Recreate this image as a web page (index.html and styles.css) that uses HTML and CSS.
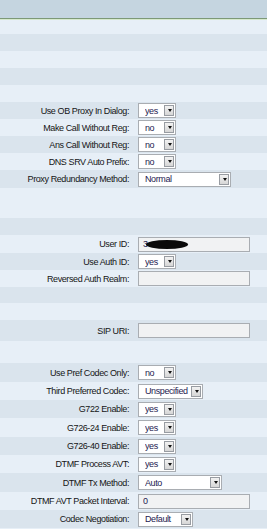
FILE: index.html
```html
<!DOCTYPE html>
<html lang="en">
<head>
    <meta charset="UTF-8">
    <meta name="viewport" content="width=device-width, initial-scale=1.0">
    <title>Line Settings</title>
    <link rel="stylesheet" href="styles.css">
</head>
<body>

    <div class="topbar"></div>

    <!-- Proxy and Registration -->
    <div class="settings">
        <div class="row h14"></div>
        <div class="row alt"></div>
        <div class="row"></div>
        <div class="row alt"></div>
        <div class="row"></div>

        <div class="row alt">
            <label>Use OB Proxy In Dialog:</label>
            <span class="select w38"><select><option>yes</option><option>no</option></select></span>
        </div>
        <div class="row">
            <label>Make Call Without Reg:</label>
            <span class="select w38"><select><option>no</option><option>yes</option></select></span>
        </div>
        <div class="row alt">
            <label>Ans Call Without Reg:</label>
            <span class="select w38"><select><option>no</option><option>yes</option></select></span>
        </div>
        <div class="row">
            <label>DNS SRV Auto Prefix:</label>
            <span class="select w38"><select><option>no</option><option>yes</option></select></span>
        </div>
        <div class="row alt h18">
            <label>Proxy Redundancy Method:</label>
            <span class="select w93"><select><option>Normal</option><option>Based on SRV Port</option></select></span>
        </div>

        <!-- Subscriber Information -->
        <div class="row h14"></div>
        <div class="row h16"></div>
        <div class="row alt"></div>

        <div class="row h18">
            <label>User ID:</label>
            <span class="field">
                <input class="text" type="text" value="3">
                <span class="redact"></span>
            </span>
        </div>
        <div class="row alt">
            <label>Use Auth ID:</label>
            <span class="select w38"><select><option>yes</option><option>no</option></select></span>
        </div>
        <div class="row">
            <label>Reversed Auth Realm:</label>
            <input class="text" type="text" value="">
        </div>

        <div class="row alt h16"></div>
        <div class="row"></div>

        <div class="row alt h21">
            <label>SIP URI:</label>
            <input class="text" type="text" value="">
        </div>

        <!-- Audio Configuration -->
        <div class="row h22"></div>

        <div class="row alt h19">
            <label>Use Pref Codec Only:</label>
            <span class="select w38"><select><option>no</option><option>yes</option></select></span>
        </div>
        <div class="row h18">
            <label>Third Preferred Codec:</label>
            <span class="select w65"><select><option>Unspecified</option><option>G711u</option></select></span>
        </div>
        <div class="row alt h18">
            <label>G722 Enable:</label>
            <span class="select w38"><select><option>yes</option><option>no</option></select></span>
        </div>
        <div class="row h19">
            <label>G726-24 Enable:</label>
            <span class="select w38"><select><option>yes</option><option>no</option></select></span>
        </div>
        <div class="row alt h18">
            <label>G726-40 Enable:</label>
            <span class="select w38"><select><option>yes</option><option>no</option></select></span>
        </div>
        <div class="row h18">
            <label>DTMF Process AVT:</label>
            <span class="select w38"><select><option>yes</option><option>no</option></select></span>
        </div>
        <div class="row alt h19">
            <label>DTMF Tx Method:</label>
            <span class="select w84"><select><option>Auto</option><option>InBand</option></select></span>
        </div>
        <div class="row h18">
            <label>DTMF AVT Packet Interval:</label>
            <input class="text" type="text" value="0">
        </div>
        <div class="row alt h18">
            <label>Codec Negotiation:</label>
            <span class="select w55"><select><option>Default</option><option>List All</option></select></span>
        </div>
    </div>

</body>
</html>
```

FILE: styles.css
```css
/* General */
body {
    margin: 0;
    font-family: "Liberation Sans", Arial, sans-serif;
    font-size: 9px;
    letter-spacing: -0.4px;
    color: #151515;
    background-color: #e7eff7;
}

.topbar {
    height: 20px;
    background: linear-gradient(to bottom, #c5d5e0 0, #c5d5e0 18px, #7d9977 18px, #7d9977 19px, #d6e9cd 19px);
}

/* Setting rows */
.row {
    display: grid;
    grid-template-columns: 129px auto;
    column-gap: 9px;
    align-items: center;
    justify-content: start;
    height: 17px;
    background-color: #e7eff7;
}

.row.alt {
    background-color: #dae4ed;
}

.h14 { height: 14px; }
.h16 { height: 16px; }
.h18 { height: 18px; }
.h19 { height: 19px; }
.h21 { height: 21px; }
.h22 { height: 22px; }

.row label {
    text-align: right;
    white-space: nowrap;
}

/* Drop-downs */
.select {
    position: relative;
    display: block;
    box-sizing: border-box;
    height: 15px;
    border: 1px solid #a9adb2;
    background-color: #fff;
}

.select select {
    appearance: none;
    -webkit-appearance: none;
    display: block;
    width: 100%;
    height: 13px;
    margin: 0;
    padding: 0 0 0 6px;
    border: none;
    background: transparent;
    font: inherit;
    letter-spacing: inherit;
    color: #1e2150;
    outline: none;
}

.select::after {
    content: "";
    position: absolute;
    top: 1px;
    right: 1px;
    width: 8px;
    height: 9px;
    border: 1px solid #989ca2;
    background: linear-gradient(to bottom, #f2f2f2, #d6d6d6);
}

.select::before {
    content: "";
    position: absolute;
    top: 5px;
    right: 3.5px;
    z-index: 1;
    border-left: 2.5px solid transparent;
    border-right: 2.5px solid transparent;
    border-top: 3px solid #111;
}

.w38 { width: 38px; }
.w55 { width: 55px; }
.w65 { width: 65px; }
.w84 { width: 84px; }
.w93 { width: 93px; }

/* Text inputs */
.text {
    display: block;
    box-sizing: border-box;
    width: 112px;
    height: 15px;
    margin: 0;
    padding: 0 0 0 4px;
    border: 1px solid #a9adb2;
    background-color: #f1f2f3;
    font: inherit;
    letter-spacing: inherit;
    color: #1e2150;
    outline: none;
}

.field {
    position: relative;
    display: block;
}

.redact {
    position: absolute;
    top: 3px;
    left: 8px;
    width: 42px;
    height: 9px;
    border-radius: 50%;
    background-color: #0a0a0a;
}
```
